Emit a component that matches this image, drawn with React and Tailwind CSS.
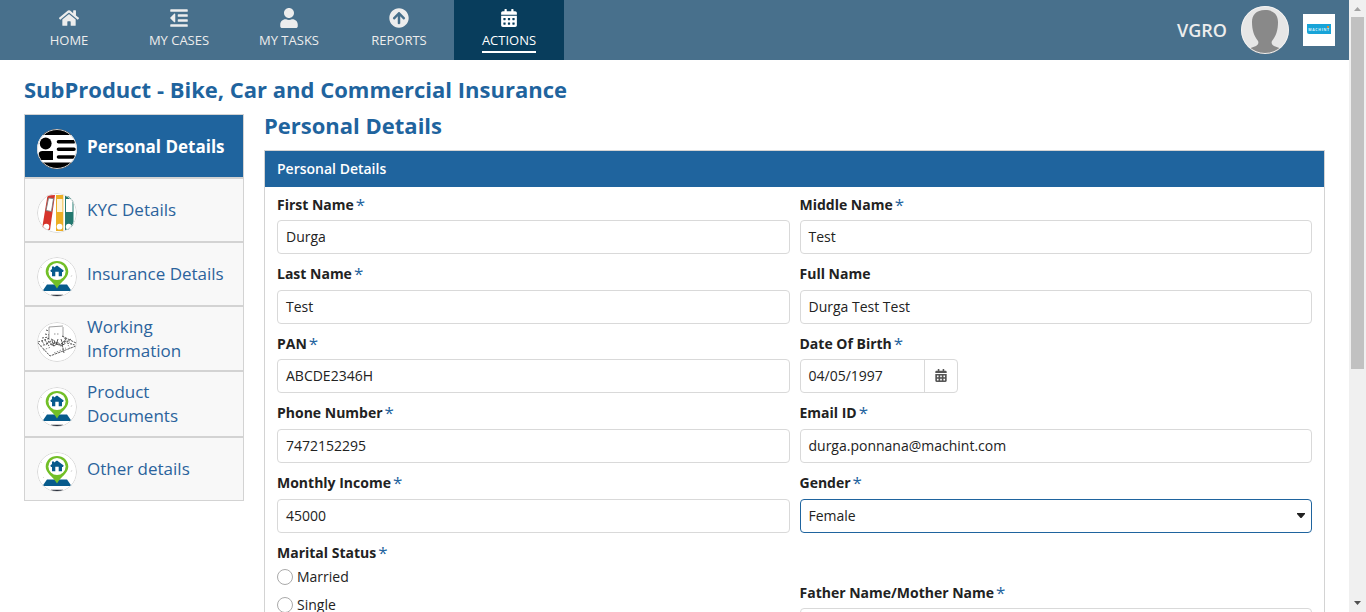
import React from "react";
import { FaHome, FaOutdent, FaUser, FaArrowCircleUp, FaCalendarAlt } from "react-icons/fa";

const nav = [
  { label: "HOME", icon: <FaHome className="h-[18px] w-5" /> },
  { label: "MY CASES", icon: <FaOutdent className="h-[20px] w-[18px]" /> },
  { label: "MY TASKS", icon: <FaUser className="h-5 w-[18px]" /> },
  { label: "REPORTS", icon: <FaArrowCircleUp className="h-5 w-5" /> },
  { label: "ACTIONS", icon: <FaCalendarAlt className="h-[18px] w-4" />, active: true },
];

function Thumb({ children }) {
  return (
    <svg viewBox="0 0 40 40" className="h-10 w-10 rounded-full">
      <rect width="40" height="40" fill="#fff" />
      {children}
      <circle cx="20" cy="20" r="19.500" fill="none" stroke="#d9d9d9" />
    </svg>
  );
}

function CardIcon() {
  return (
    <Thumb>
      <rect width="40" height="6" fill="#000" />
      <rect y="33.500" width="40" height="6.500" fill="#000" />
      <circle cx="8.700" cy="14.500" r="5.900" fill="#000" />
      <path d="M1.500 31V26q0-4 4-4H16v9z" fill="#000" />
      <path d="M21.500 12.700H37M21.500 20.200H37M21.500 28H37" stroke="#000" strokeWidth="3.600" strokeLinecap="round" />
    </Thumb>
  );
}

function BindersIcon() {
  return (
    <Thumb>
      <path d="M10.500 2.500l7.500-.5-5 35-8-1z" fill="#d6342b" />
      <path d="M11.500 5l5 .500-2 13-5.500-1z" fill="#fff" stroke="#777" strokeWidth=".9" />
      <rect x="19" y="2" width="7.300" height="36" fill="#ecae25" />
      <rect x="20" y="6" width="5.500" height="13" fill="#fdf3d8" />
      <rect x="28" y="3" width="8.500" height="34" fill="#23786f" />
      <rect x="29" y="6" width="6.500" height="13" fill="#fff" />
      <circle cx="9.300" cy="33.700" r="3" fill="#fff" />
      <circle cx="22.600" cy="33.700" r="2.900" fill="#fff" />
      <circle cx="31.700" cy="33.700" r="2.900" fill="#fff" />
    </Thumb>
  );
}

function PinIcon() {
  return (
    <Thumb>
      <path d="M10 27.500h20l4.500 6.500h-29z" fill="#075b8c" />
      <path d="M20 4C13.500 4 8.700 8.700 8.700 14.800c0 6.400 7.300 9.700 11.300 16.700 4-7 11.300-10.300 11.300-16.700C31.300 8.700 26.500 4 20 4z" fill="#72bf27" />
      <circle cx="20" cy="14.500" r="8.600" fill="#fff" />
      <path d="M20 8.500l6.700 5-.7 1.500h-1v4.300h-3.300v-4.500h-3.400v4.500H15V15h-1l-.7-1.500 1.700-1.500V9.500h2v1z" fill="#075b8c" />
      <path d="M14 38.300h12" stroke="#252c38" strokeWidth="1.300" />
      <path d="M4 11l1-1M33 6l1 1M35 18l-1 2M6 25l1 1" stroke="#ccc" strokeWidth=".7" />
    </Thumb>
  );
}

function DeskIcon() {
  return (
    <Thumb>
      <g fill="none" stroke="#333" strokeWidth=".8">
        <path d="M12 5l14-1M12 5v13M26 5v10" stroke="#888" />
        <path d="M1 21l12 13L39 24M25 14l14 7" strokeDasharray="2.500 .8" />
        <path d="M1 20l12-4M9 8l3 1M8 12l4 1M5 16l7-1" strokeDasharray="2 1.200" />
        <path
          d="M14 17l4 2-2 3 5-2 2 3 4-4 3 1 4-3M13 22l4 2 3-2 4 2 5-3M25 22l2 9M9 22l5-3M15 18l1 5M21 17l-2 6M24 17l2 6M29 16l-2 5"
          strokeDasharray="3 .6"
        />
        <path d="M3 24l9-2M6 28l8-3M27 16l8 6M17 12h6M17 31l12-5M31 23l2 3" stroke="#777" strokeDasharray="1.500 1.500" />
        <path d="M5 19l3 5M8 18l4 6M11 19l6 5M17 20l5 3M30 21l8 2" strokeDasharray="2 1" />
      </g>
    </Thumb>
  );
}

const steps = [
  { label: "Personal Details", icon: <CardIcon />, box: "h-[62px]", active: true },
  { label: "KYC Details", icon: <BindersIcon />, box: "h-[62px]" },
  { label: "Insurance Details", icon: <PinIcon />, box: "h-[62px]" },
  { label: "Working Information", icon: <DeskIcon />, box: "h-[63px]", thumb: "mt-[7px]" },
  { label: "Product Documents", icon: <PinIcon />, box: "h-[64px]" },
  { label: "Other details", icon: <PinIcon />, box: "h-[62px]" },
];

function Label({ children, required = true }) {
  return (
    <div className="flex h-[25.550px] items-start gap-[2px] text-[14px] leading-5 font-bold whitespace-nowrap text-[#222]">
      <span>{children}</span>
      {required && <span className="text-[17px] font-normal text-[#1f649e]">*</span>}
    </div>
  );
}

function Field({ label, value, required = true, kind }) {
  return (
    <div className="h-[69.600px]">
      <Label required={required}>{label}</Label>
      {kind === "date" ? (
        <div className="flex h-[34px] w-[158px] rounded-[4px] border border-[#d9d9d9]">
          <div className="flex w-[124px] items-center border-r border-[#d9d9d9] pl-2">{value}</div>
          <div className="flex flex-1 items-center justify-center text-[#555]">
            <FaCalendarAlt className="mb-px h-[13px] w-3" />
          </div>
        </div>
      ) : (
        <div
          className={
            kind === "select"
              ? "flex h-[34px] items-center justify-between rounded-[4px] border border-[#1f649e] pr-[6px] pl-2"
              : "flex h-[34px] items-center rounded-[4px] border border-[#d9d9d9] px-2"
          }
        >
          <span>{value}</span>
          {kind === "select" && (
            <svg viewBox="0 0 8 5" className="h-[5px] w-2">
              <path d="M0 0h8v1L4.500 5h-1L0 1z" fill="#222" />
            </svg>
          )}
        </div>
      )}
    </div>
  );
}

function Radio({ label }) {
  return (
    <div className="flex h-7 items-center gap-1">
      <span className="h-4 w-4 rounded-full border border-[#aaa]" />
      <span>{label}</span>
    </div>
  );
}

function Scrollbar() {
  return (
    <div className="flex h-full w-[17px] shrink-0 flex-col items-center bg-[#f0f0f0]">
      <svg viewBox="0 0 17 17" className="h-[17px] w-[17px] shrink-0">
        <path d="M5 11h7L8.500 7z" fill="#a3a3a3" />
      </svg>
      <div className="h-[352px] w-[13px] bg-[#c1c1c1]" />
      <div className="flex-1" />
      <svg viewBox="0 0 17 17" className="h-[17px] w-[17px] shrink-0">
        <path d="M5 6h7l-3.500 4z" fill="#505050" />
      </svg>
    </div>
  );
}

export default function App() {
  return (
    <div className="flex h-[612px] w-[1366px] overflow-hidden bg-white font-['Open_Sans',sans-serif] text-[14px] leading-5 text-[#222]">
      <div className="flex min-w-0 flex-1 flex-col">
        <header className="flex h-[60px] shrink-0 items-center justify-between bg-[#48708c] pr-[14px] pl-[14px]">
          <nav className="flex h-full">
            {nav.map((n) => (
              <div
                key={n.label}
                className={
                  n.active
                    ? "flex w-[110px] flex-col items-center bg-[#083d5c] pt-2 text-white"
                    : "flex w-[110px] flex-col items-center pt-2 text-[#ededed]"
                }
              >
                <div className="flex h-5 items-center">{n.icon}</div>
                <div
                  className={
                    n.active
                      ? "mt-[3px] h-[22px] border-b-2 border-white text-[13px] leading-[18px]"
                      : "mt-[3px] h-[22px] text-[13px] leading-[18px]"
                  }
                >
                  {n.label}
                </div>
              </div>
            ))}
          </nav>
          <div className="flex items-center gap-[14px]">
            <span className="text-[18px] leading-6 font-semibold text-[#ededed]">VGRO</span>
            <svg viewBox="0 0 48 48" className="h-12 w-12 rounded-full">
              <rect width="48" height="48" fill="#e6e6e6" />
              <path
                d="M24 4c-9 0-13 5-13 12 0 8 2 14 6 19 1 2 0 4-2 5L7 43v5h34v-5l-8-3c-2-1-3-3-2-5 4-5 6-11 6-19 0-7-4-12-13-12z"
                fill="#898989"
              />
              <circle cx="24" cy="24" r="23.500" fill="none" stroke="#f2f2f2" />
            </svg>
            <div className="flex h-8 w-8 items-center justify-center bg-white">
              <div className="relative mb-[2px] flex h-[10px] w-6 items-center justify-center rounded-bl-[2px] bg-[#18a4d8]">
                <span className="pt-px text-[3.500px] leading-none font-bold tracking-[0.700px] text-[#d8f1fa]">MACHINT</span>
                <span className="absolute top-[2px] right-[2px] h-[2px] w-[2px] bg-[#d88b35]" />
              </div>
            </div>
          </div>
        </header>

        <main className="flex flex-col pr-6 pl-6">
          <h1 className="mt-[13px] h-[33px] text-[22px] leading-8 font-bold text-[#1f649e]">
            SubProduct - Bike, Car and Commercial Insurance
          </h1>
          <div className="mt-2 flex items-start gap-5">
            <aside className="flex w-[220px] shrink-0 flex-col gap-[2px] border border-[#d3d3d3] bg-[#d3d3d3]">
              {steps.map((s) => (
                <div
                  key={s.label}
                  className={
                    (s.active ? "bg-[#1f649e] font-bold text-white " : "bg-[#f8f8f8] text-[#2b639c] ") +
                    "flex items-center gap-[10px] pl-3 text-[17px] leading-6 " +
                    s.box
                  }
                >
                  <div className={"shrink-0 " + (s.thumb || "mt-[5px]")}>{s.icon}</div>
                  <span className={s.active ? "w-[140px] pt-px" : "w-[140px]"}>{s.label}</span>
                </div>
              ))}
            </aside>

            <section className="flex-1">
              <h2 className="-mt-[5px] h-[41px] text-[22px] leading-8 font-bold text-[#1f649e]">Personal Details</h2>
              <div className="h-[560px] border border-[#d3d3d3]">
                <div className="flex h-9 items-center bg-[#1f649e] px-3 font-semibold text-white">Personal Details</div>
                <div className="grid grid-cols-2 gap-x-[10px] px-3 pt-[7.600px]">
                  <Field label="First Name" value="Durga" />
                  <Field label="Middle Name" value="Test" />
                  <Field label="Last Name" value="Test" />
                  <Field label="Full Name" value="Durga Test Test" required={false} />
                  <Field label="PAN" value="ABCDE2346H" />
                  <Field label="Date Of Birth" value="04/05/1997" kind="date" />
                  <Field label="Phone Number" value="7472152295" />
                  <Field label="Email ID" value="durga.ponnana@machint.com" />
                  <Field label="Monthly Income" value="45000" />
                  <Field label="Gender" value="Female" kind="select" />
                  <div>
                    <div className="h-[20.400px]">
                      <Label>Marital Status</Label>
                    </div>
                    <Radio label="Married" />
                    <Radio label="Single" />
                  </div>
                  <div className="pt-10">
                    <Field label="Father Name/Mother Name" value="" />
                  </div>
                </div>
              </div>
            </section>
          </div>
        </main>
      </div>
      <Scrollbar />
    </div>
  );
}
